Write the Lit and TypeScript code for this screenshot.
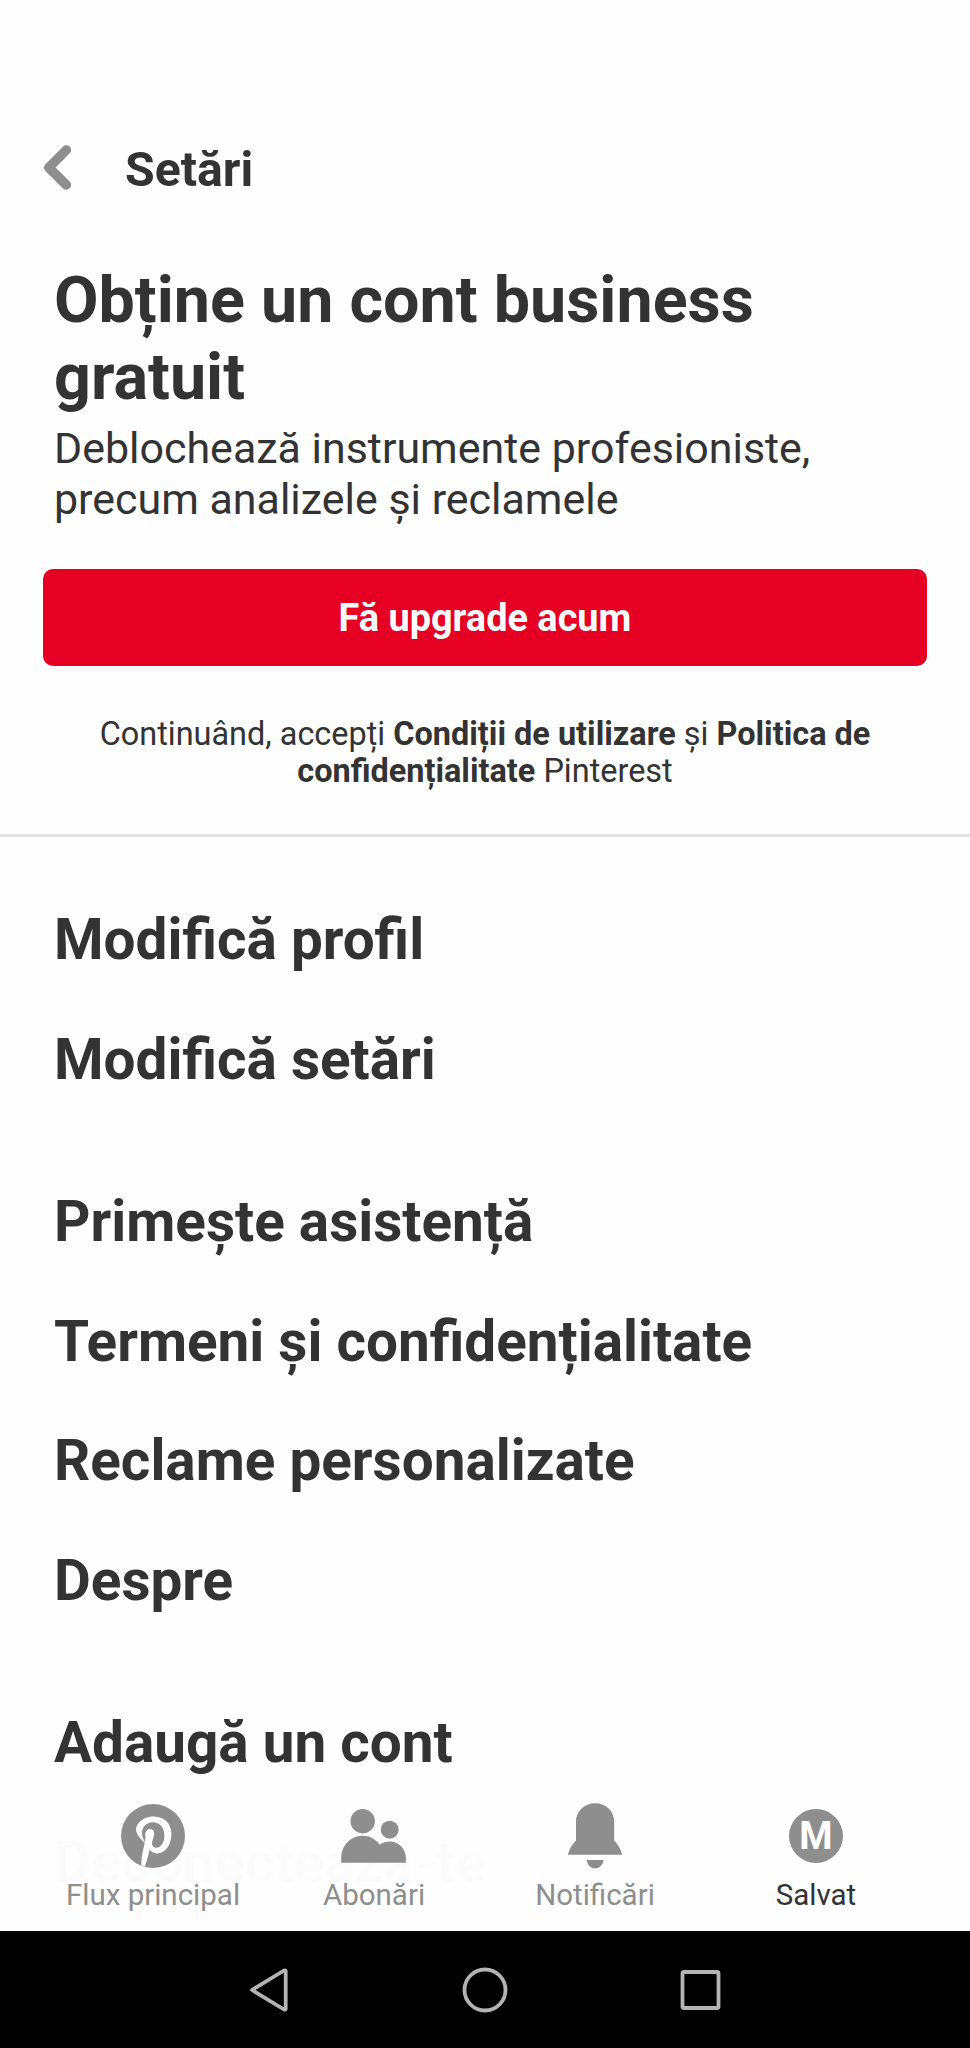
import { LitElement, html, css, svg } from "lit";
import { customElement, property } from "lit/decorators.js";

const menuGroups = [
  ["Modifică profil", "Modifică setări"],
  ["Primește asistență", "Termeni și confidențialitate", "Reclame personalizate", "Despre"],
  ["Adaugă un cont", "Deconectează-te"],
];

const icons: Record<string, unknown> = {
  home: svg`<circle cx="36" cy="36" r="32" fill="#8e8e8e"/>
    <path d="M28.3 43.4C20.5 36.4 17.2 30.8 20 25.6C23.7 18.6 31 16.5 37.2 16.6C47.500 16.8 54.600 24 54.400 34.500C54.200 45.500 48 53.400 40.200 53.400C36.500 53.400 33.900 51.800 32.700 49.600C31.300 55.500 29.900 61 27.900 66.600L24.400 65.300C24.100 60.500 25 54.500 26.200 49.500C27.200 45.200 28.100 41.500 28.500 37.200C27.500 32.500 29.600 28.900 33 28.900C36.200 28.900 37.800 31.600 37.100 35C36.400 38.400 34.600 41.700 35.100 44.400C35.600 46.700 37.300 47.700 39.300 47.700C44.200 47.700 47.500 42 47.400 35.200C47.300 27.200 42.300 22.300 36.200 22.300C28.800 22.300 24.900 27.500 25 33.200C25 36.500 26.500 39.200 28.300 43.400Z" fill="#fff"/>`,
  people: svg`<g fill="#8e8e8e"><circle cx="24.700" cy="21.200" r="12.200"/><circle cx="51.700" cy="29.700" r="9"/>
    <path d="M3.200 62.800V58C3.200 45.500 12.700 35.800 24.700 35.800C31.700 35.800 37.900 39.200 41.900 44.700C44.800 42.600 48.200 41.500 51.700 41.500C60.500 41.500 67.900 48.800 67.900 58V62.800Z"/></g>`,
  bell: svg`<g fill="#8e8e8e"><path d="M17 21.500C17 11.200 25.500 3.200 36.200 3.200S55.200 11.200 55.200 21.500V40.500Q60.500 45.500 63.200 54.800H8.800Q11.500 45.500 17 40.500Z"/>
    <path d="M27.700 60H44.500C44 64.700 40.700 68.300 36.100 68.300S28.200 64.700 27.700 60Z"/></g>`,
};

@customElement("nav-tab")
class NavTab extends LitElement {
  @property() label = "";
  @property() icon = "";
  @property({ type: Boolean, reflect: true }) active = false;

  static styles = css`
    :host { display: flex; flex-direction: column; align-items: center; color: #8e8e8e; }
    :host([active]) { color: #333; }
    .icon { display: block; width: 72px; height: 72px; }
    .avatar-box { height: 72px; display: flex; align-items: center; justify-content: center; }
    .avatar { width: 54px; height: 54px; border-radius: 50%; background: #8e8e8e; color: #fff;
      font-weight: 700; font-size: 38px; line-height: 55px; text-align: center; }
    .label { font-size: 29.5px; line-height: 36px; margin-top: 5px; white-space: nowrap; }
  `;

  render() {
    return html`
      ${this.icon === "avatar"
        ? html`<div class="avatar-box"><div class="avatar">M</div></div>`
        : html`<svg class="icon" viewBox="0 0 72 72">${icons[this.icon]}</svg>`}
      <span class="label">${this.label}</span>
    `;
  }
}

@customElement("app-root")
class AppRoot extends LitElement {
  static styles = css`
    :host { display: block; font-family: Roboto, "Liberation Sans", sans-serif; color: #333; }
    * { box-sizing: border-box; }
    .screen { position: relative; width: 970px; height: 2048px; background: #fefefe; overflow: hidden;
      display: flex; flex-direction: column; }
    .content { height: 1931px; flex: none; overflow: hidden; }
    .header { display: flex; align-items: center; height: 100px; margin-top: 119px; padding-left: 38px; }
    .back { width: 40px; height: 60px; }
    .title { margin: 2px 0 0 47px; font-size: 48.2px; line-height: 60px; font-weight: 700; }
    .promo { padding: 43px 43px 0; }
    .headline { margin: 0 0 0 11px; font-size: 64.6px; line-height: 77px; font-weight: 700; }
    .lead { margin: 7px 0 0 11px; font-size: 42.95px; line-height: 51px; }
    .cta { display: block; width: 884px; height: 97px; margin: 44px 0 0; padding: 2px 0 0; border: 0; border-radius: 10px;
      background: #e60023; color: #fff; font: 700 37.900px/95px Roboto, "Liberation Sans", sans-serif; }
    .terms { margin: 49.500px 0 0; text-align: center; font-size: 32.450px; line-height: 37.500px; }
    .divider { height: 3px; margin-top: 43.500px; background: #e2e2e2; }
    .menu { display: flex; flex-direction: column; gap: 43px; padding: 43px 54px 0; }
    .item { height: 119.500px; line-height: 119.500px; font-size: 56.650px; font-weight: 700; white-space: nowrap; }
    .tabs { position: absolute; left: 0; right: 0; top: 1780px; height: 151px; padding: 20px 43.500px 0 42.500px;
      background: rgba(254, 254, 254, 0.988); display: grid; grid-template-columns: repeat(4, 1fr); }
    .system { flex: 1; background: #000; display: flex; align-items: center; justify-content: center; }
    .sysicons { width: 480px; height: 60px; }
  `;

  render() {
    return html`
      <div class="screen">
        <main class="content">
          <header class="header">
            <svg class="back" viewBox="0 0 40 60" fill="none" stroke="#8e8e8e" stroke-width="9.600" stroke-linecap="round" stroke-linejoin="round">
              <path d="M28.300 11L10.800 28.700L28.300 46"/>
            </svg>
            <h1 class="title">Setări</h1>
          </header>
          <section class="promo">
            <h2 class="headline">Obține un cont business<br />gratuit</h2>
            <p class="lead">Deblochează instrumente profesioniste,<br />precum analizele și reclamele</p>
            <button class="cta">Fă upgrade acum</button>
            <p class="terms">Continuând, accepți <b>Condiții de utilizare</b> și <b>Politica de<br />confidențialitate</b> Pinterest</p>
          </section>
          <div class="divider"></div>
          <div class="menu">
            ${menuGroups.map((group) => html`<div>${group.map((text) => html`<div class="item">${text}</div>`)}</div>`)}
          </div>
        </main>
        <nav class="tabs">
          <nav-tab icon="home" label="Flux principal"></nav-tab>
          <nav-tab icon="people" label="Abonări"></nav-tab>
          <nav-tab icon="bell" label="Notificări"></nav-tab>
          <nav-tab icon="avatar" label="Salvat" active></nav-tab>
        </nav>
        <footer class="system">
          <svg class="sysicons" viewBox="0 0 480 60" fill="none" stroke="#b4b4b4" stroke-width="3.800" stroke-linejoin="round">
            <path d="M7 30L39 10.500Q40.700 9.800 40.700 11.500V48.500Q40.700 50.200 39 49.500Z"/>
            <circle cx="240" cy="30" r="20.500"/>
            <rect x="437.500" y="12" width="36" height="36" rx="1.500"/>
          </svg>
        </footer>
      </div>
    `;
  }
}
